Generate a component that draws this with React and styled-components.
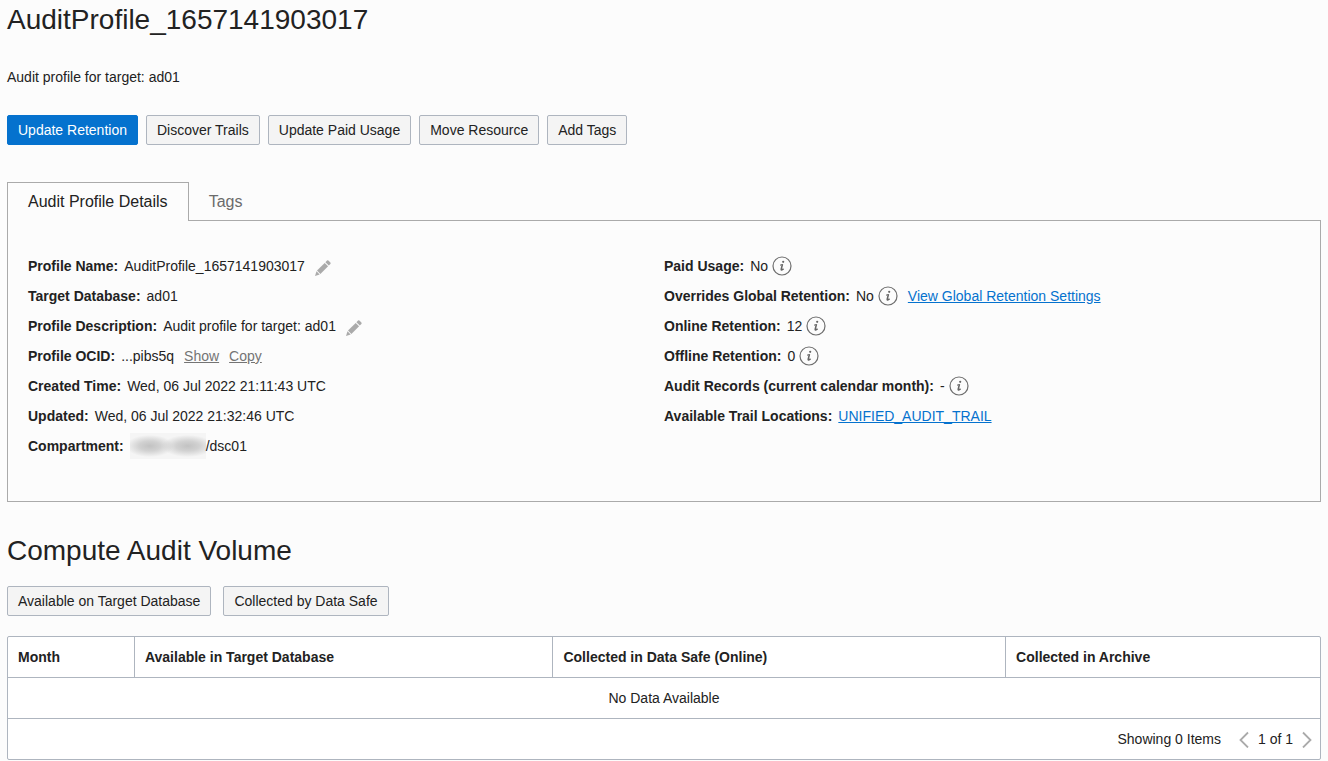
import React from 'react';
import styled, { createGlobalStyle } from 'styled-components';

const GlobalStyle = createGlobalStyle`
  * { box-sizing: border-box; }
  body {
    margin: 0;
    background: #fcfcfc;
    color: #222;
    font-family: "Liberation Sans", Arial, sans-serif;
    font-size: 14px;
    line-height: 20px;
  }
`;

const Page = styled.main`
  padding: 0 7px 1px;
`;

const Title = styled.h1`
  margin: 0;
  font-size: 28px;
  font-weight: 400;
  line-height: 40px;
`;

const Description = styled.p`
  margin: 27px 0 28px;
`;

const Toolbar = styled.div`
  display: flex;
  flex-wrap: wrap;
  gap: ${(p) => p.$gap}px;
`;

const Button = styled.button`
  height: 30px;
  padding: 0 10px;
  border: 1px solid ${(p) => (p.$primary ? '#0572ce' : '#aeb5bf')};
  border-radius: 2px;
  background: ${(p) => (p.$primary ? '#0572ce' : '#f4f4f4')};
  color: ${(p) => (p.$primary ? '#fff' : '#222')};
  font: inherit;
  white-space: nowrap;
  cursor: pointer;
`;

const TabList = styled.div`
  display: flex;
  margin-top: 37px;
`;

const Tab = styled.button`
  height: 39px;
  margin-bottom: -1px;
  padding: 0 20px;
  border: solid #aaa;
  border-width: ${(p) => (p.$active ? '1px 1px 0' : '0')};
  background: ${(p) => (p.$active ? '#fcfcfc' : 'transparent')};
  color: ${(p) => (p.$active ? '#222' : '#6b6b6b')};
  font: inherit;
  font-size: 16px;
  cursor: pointer;
  z-index: 1;
`;

const Panel = styled.section`
  display: grid;
  grid-template-columns: 1fr 1fr;
  padding: 30px 20px 40px;
  border: 1px solid #aaa;
`;

const Details = styled.dl`
  margin: 0;
`;

const Row = styled.div`
  display: flex;
  align-items: center;
  gap: 6px;
  height: 30px;
  white-space: nowrap;
`;

const Label = styled.dt`
  font-weight: 700;
`;

const Value = styled.dd`
  display: flex;
  align-items: center;
  margin: 0;
`;

const Link = styled.a`
  margin-left: ${(p) => (p.$spaced ? 10 : 0)}px;
  color: ${(p) => (p.$muted ? '#747474' : '#0572ce')};
  text-decoration: underline;
`;

const IconButton = styled.button`
  display: flex;
  margin: 0 0 0 ${(p) => p.$space || 0}px;
  padding: 0;
  border: 0;
  background: none;
  cursor: pointer;
`;

const EditButton = styled(IconButton)`
  padding-top: 4px;
`;

const Redacted = styled.span`
  width: 76px;
  height: 26px;
  background:
    radial-gradient(ellipse 24px 11px at 26% 50%, #c2c2c2, rgba(194, 194, 194, 0.7) 45%, transparent),
    radial-gradient(ellipse 26px 11px at 76% 50%, #c2c2c2, rgba(194, 194, 194, 0.7) 45%, transparent),
    #f5f5f5;
`;

const SectionTitle = styled.h2`
  margin: 29px 0 15px;
  font-size: 28px;
  font-weight: 400;
  line-height: 40px;
`;

const TableFrame = styled.div`
  margin-top: 20px;
  border: 1px solid #aeb5bf;
  border-radius: 2px;
  background: #fff;
`;

const Table = styled.table`
  width: 100%;
  border-collapse: separate;
  border-spacing: 0;
  table-layout: fixed;
`;

const HeadCell = styled.th`
  width: ${(p) => p.$width};
  height: 41px;
  padding: 0 10px;
  border-bottom: 1px solid #aeb5bf;
  text-align: left;
  & + & { border-left: 1px solid #aeb5bf; }
`;

const EmptyCell = styled.td`
  height: 41px;
  padding: 0;
  border-bottom: 1px solid #aeb5bf;
  text-align: center;
`;

const Footer = styled.div`
  display: flex;
  align-items: center;
  justify-content: flex-end;
  height: 40px;
  padding-right: 8px;
`;

const Pager = styled.nav`
  display: flex;
  align-items: center;
  gap: 9px;
  margin-left: 18px;
`;

const Pencil = () => (
  <svg width="16" height="16" viewBox="0 0 16 16" fill="#aaa" aria-hidden="true">
    <path d="M10.4 2.2 12 .6Q12.7 0 13.4.6L15.4 2.6Q16 3.3 15.4 4L13.8 5.6Z" />
    <path d="M9.7 2.9 13.1 6.3 5.4 14 2 10.6Z" />
    <path d="M1.5 11.3 4.7 14.5 0 16Z" />
  </svg>
);

const InfoIcon = () => (
  <svg width="20" height="20" viewBox="0 0 20 20" fill="none" aria-hidden="true">
    <circle cx="10" cy="10" r="9" stroke="#6e6e6e" strokeWidth="1.2" />
    <circle cx="11.2" cy="5.8" r="1.1" fill="#666" />
    <path d="M8 9.2 10.6 8.5" stroke="#666" strokeWidth="1" />
    <path d="M10.5 8.3 9.2 13.2Q9 14.3 10 13.9L11.6 12.8" stroke="#666" strokeWidth="1.5" />
  </svg>
);

const Chevron = ({ d }) => (
  <svg width="10" height="18" viewBox="0 0 10 18" fill="none" stroke="#aaa" strokeWidth="1.8" aria-hidden="true">
    <path d={d} />
  </svg>
);

const Info = ({ about }) => (
  <IconButton type="button" $space={4} aria-label={`About ${about}`}>
    <InfoIcon />
  </IconButton>
);

const Edit = ({ field }) => (
  <EditButton type="button" $space={10} aria-label={`Edit ${field}`}>
    <Pencil />
  </EditButton>
);

const Field = ({ label, children }) => (
  <Row>
    <Label>{label}:</Label>
    <Value>{children}</Value>
  </Row>
);

const columns = [
  ['Month', '9.6%'],
  ['Available in Target Database', '31.9%'],
  ['Collected in Data Safe (Online)', '34.5%'],
  ['Collected in Archive', '24%'],
];

export default function App() {
  return (
    <>
      <GlobalStyle />
      <Page>
        <Title>AuditProfile_1657141903017</Title>
        <Description>Audit profile for target: ad01</Description>
        <Toolbar $gap={8}>
          <Button $primary>Update Retention</Button>
          <Button>Discover Trails</Button>
          <Button>Update Paid Usage</Button>
          <Button>Move Resource</Button>
          <Button>Add Tags</Button>
        </Toolbar>

        <TabList role="tablist">
          <Tab role="tab" aria-selected="true" $active>Audit Profile Details</Tab>
          <Tab role="tab" aria-selected="false">Tags</Tab>
        </TabList>
        <Panel role="tabpanel">
          <Details>
            <Field label="Profile Name">AuditProfile_1657141903017<Edit field="profile name" /></Field>
            <Field label="Target Database">ad01</Field>
            <Field label="Profile Description">Audit profile for target: ad01<Edit field="profile description" /></Field>
            <Field label="Profile OCID">
              ...pibs5q
              <Link href="#show" $muted $spaced>Show</Link>
              <Link href="#copy" $muted $spaced>Copy</Link>
            </Field>
            <Field label="Created Time">Wed, 06 Jul 2022 21:11:43 UTC</Field>
            <Field label="Updated">Wed, 06 Jul 2022 21:32:46 UTC</Field>
            <Field label="Compartment">
              <Redacted aria-hidden="true" />/dsc01
            </Field>
          </Details>
          <Details>
            <Field label="Paid Usage">No<Info about="paid usage" /></Field>
            <Field label="Overrides Global Retention">
              No<Info about="overriding global retention" />
              <Link href="#retention" $spaced>View Global Retention Settings</Link>
            </Field>
            <Field label="Online Retention">12<Info about="online retention" /></Field>
            <Field label="Offline Retention">0<Info about="offline retention" /></Field>
            <Field label="Audit Records (current calendar month)">-<Info about="audit records" /></Field>
            <Field label="Available Trail Locations"><Link href="#trail">UNIFIED_AUDIT_TRAIL</Link></Field>
          </Details>
        </Panel>

        <SectionTitle>Compute Audit Volume</SectionTitle>
        <Toolbar $gap={12}>
          <Button>Available on Target Database</Button>
          <Button>Collected by Data Safe</Button>
        </Toolbar>
        <TableFrame>
          <Table>
            <thead>
              <tr>
                {columns.map(([name, width]) => (
                  <HeadCell key={name} scope="col" $width={width}>{name}</HeadCell>
                ))}
              </tr>
            </thead>
            <tbody>
              <tr><EmptyCell colSpan={4}>No Data Available</EmptyCell></tr>
            </tbody>
          </Table>
          <Footer>
            Showing 0 Items
            <Pager aria-label="Pages">
              <IconButton type="button" aria-label="Previous page"><Chevron d="M9 2.5 1.5 10 9 17.5" /></IconButton>
              1 of 1
              <IconButton type="button" aria-label="Next page"><Chevron d="M1 2.5 8.5 10 1 17.5" /></IconButton>
            </Pager>
          </Footer>
        </TableFrame>
      </Page>
    </>
  );
}
